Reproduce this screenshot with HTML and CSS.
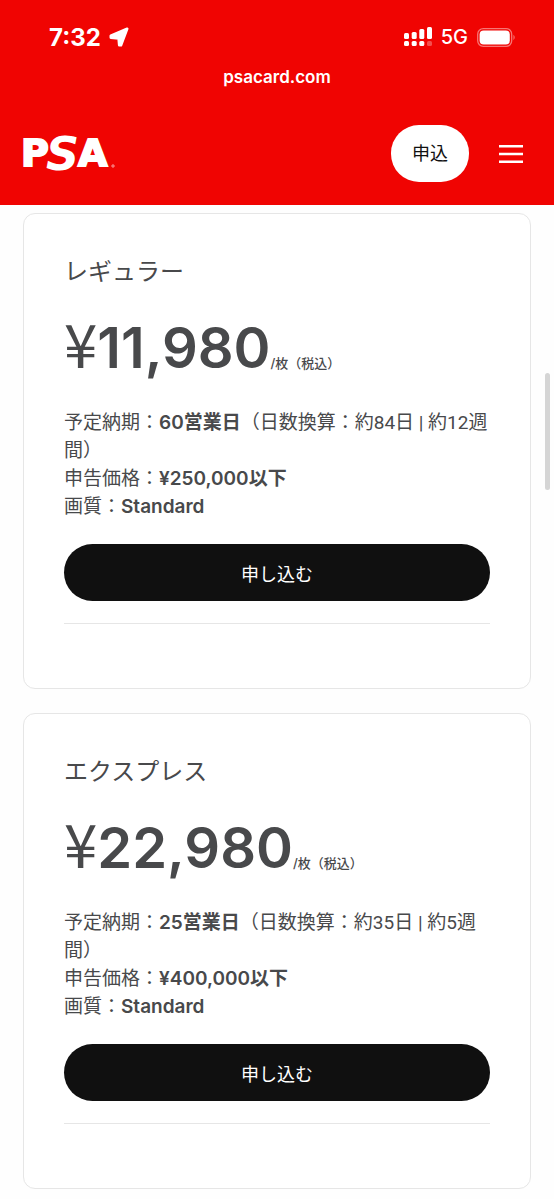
FILE: index.html
```
<!DOCTYPE html>
<html lang="ja">
<head>
<meta charset="utf-8">
<meta name="viewport" content="width=device-width, initial-scale=1">
<title>PSA</title>
<link rel="stylesheet" href="styles.css">
</head>
<body>
<header class="top">
  <div class="status">
    <div class="clock">
      <time>7:32</time>
      <svg class="arrow" viewBox="0 0 20 20" aria-hidden="true"><path d="M18.2 1.8 L12 18.2 L10.2 18.2 L9.6 11.4 L1.8 10.6 L1.8 8.8 Z" fill="#fff" stroke="#fff" stroke-width="2.6" stroke-linejoin="round"/></svg>
    </div>
    <div class="signals">
      <svg class="bars" viewBox="0 0 28 20" fill="#fff" aria-hidden="true">
        <rect x="0" y="6" width="5" height="6" rx="1.5"/><rect x="7.7" y="5" width="5" height="7" rx="1.5"/><rect x="15.3" y="2" width="5" height="10" rx="1.5"/><rect x="23" y="0" width="5" height="12" rx="1.5"/>
        <rect x="0" y="14" width="5" height="5" rx="1.5"/><rect x="7.7" y="14" width="5" height="5" rx="1.5"/><rect x="15.3" y="14" width="5" height="5" rx="1.5"/><rect x="23" y="14" width="5" height="5" rx="1.5" opacity=".3"/>
      </svg>
      <span class="network">5G</span>
      <svg class="battery" viewBox="0 0 39 19" aria-hidden="true"><rect x=".7" y=".7" width="34" height="17.6" rx="5.5" fill="none" stroke="#fff" stroke-opacity=".45" stroke-width="1.3"/><rect x="2.6" y="2.6" width="30.2" height="13.8" rx="4" fill="#fff"/><path d="M36.5 6.8 Q38.8 9.5 36.5 12.2 Z" fill="#fff" opacity=".5"/></svg>
    </div>
  </div>
  <div class="address">psacard.com</div>
  <nav class="nav">
    <a class="logo" href="#" aria-label="PSA">
      <svg viewBox="0 0 94 36" aria-hidden="true">
        <text class="logo-letter" x="-1" y="30">P</text>
        <text class="logo-letter" x="56" y="30">A</text>
        <text class="logo-swash" x="24" y="34">S</text>
        <circle cx="91" cy="30" r="1.2" fill="none" stroke="#fff" stroke-width=".6"/>
      </svg>
    </a>
    <div class="actions">
      <a class="apply-link" href="#">申込</a>
      <button class="menu" type="button" aria-label="メニュー"><svg viewBox="0 0 24 18" aria-hidden="true"><path d="M0 1.2H24M0 9H24M0 16.8H24" stroke="#fff" stroke-width="2.4"/></svg></button>
    </div>
  </nav>
</header>
<main class="plans">
  <article class="card">
    <h2 class="name">レギュラー</h2>
    <p class="price"><span class="yen">¥</span><span class="amount">11,980</span><span class="unit">/枚（税込）</span></p>
    <p class="details">予定納期：<b>60営業日</b>（日数換算：約84日 | 約12週間）<br>申告価格：<b>¥250,000以下</b><br>画質：<b>Standard</b></p>
    <button class="apply" type="button">申し込む</button>
    <hr class="rule">
  </article>
  <article class="card">
    <h2 class="name">エクスプレス</h2>
    <p class="price"><span class="yen">¥</span><span class="amount">22,980</span><span class="unit">/枚（税込）</span></p>
    <p class="details">予定納期：<b>25営業日</b>（日数換算：約35日 | 約5週間）<br>申告価格：<b>¥400,000以下</b><br>画質：<b>Standard</b></p>
    <button class="apply" type="button">申し込む</button>
    <hr class="rule">
  </article>
</main>
<div class="scroll-thumb"></div>
</body>
</html>
```
FILE: styles.css
```
* { box-sizing: border-box; }
body {
  margin: 0;
  background: #fefefe;
  color: #48494b;
  font-family: Inter, "Noto Sans CJK JP", sans-serif;
}
.top {
  padding-bottom: 23px;
  background: #f00402;
  color: #fff;
}
.status {
  display: flex;
  justify-content: space-between;
  align-items: center;
  padding: 24px 38px 0 49px;
  height: 50px;
}
.clock, .signals { display: flex; align-items: center; }
.clock { gap: 8px; font-size: 24px; font-weight: 700; }
.arrow { width: 20px; height: 20px; }
.signals { gap: 9px; }
.bars { width: 28px; height: 20px; }
.network { font-size: 20px; font-weight: 500; }
.battery { width: 39px; height: 19px; }
.address {
  padding-top: 15px;
  text-align: center;
  font-size: 17px;
  line-height: 24px;
  font-weight: 600;
}
.nav {
  display: flex;
  justify-content: space-between;
  align-items: center;
  padding: 36px 31px 0 22px;
}
.logo, .logo svg { display: block; }
.logo svg { width: 94px; height: 36px; overflow: visible; }
.logo-letter {
  font: bold 38px "DejaVu Sans", sans-serif;
  fill: #fff;
  stroke: #fff;
  stroke-width: 2;
}
.logo-swash {
  font: italic bold 46px "DejaVu Sans", sans-serif;
  fill: #fff;
  stroke: #f00402;
  stroke-width: 2;
  paint-order: stroke;
}
.actions { display: flex; align-items: center; gap: 30px; }
.apply-link {
  padding: 0 21px;
  border-radius: 28px;
  background: #fff;
  color: #111;
  font-size: 18px;
  line-height: 57px;
  text-decoration: none;
}
.menu { padding: 0; border: 0; background: none; }
.menu svg { display: block; width: 24px; height: 18px; }
.plans {
  display: flex;
  flex-direction: column;
  gap: 24px;
  padding: 8px 23px 12px;
}
.card {
  padding: 42px 40px 64px;
  border: 1px solid #e6e6e6;
  border-radius: 12px;
  background: #fff;
}
.name {
  margin: 0;
  font-size: 24px;
  line-height: 32px;
  font-weight: 400;
}
.price {
  display: flex;
  align-items: baseline;
  margin: 24px 0 25px;
}
.yen {
  font-family: "Noto Sans CJK JP", sans-serif;
  font-size: 60px;
  line-height: 56px;
}
.amount { font-size: 56px; font-weight: 600; line-height: 72px; }
.unit { font-size: 13px; font-weight: 500; line-height: 16px; }
.details {
  margin: 0 0 23px;
  font-family: Roboto, "Noto Sans CJK JP", sans-serif;
  font-size: 19px;
  line-height: 28px;
}
.details b {
  font-family: Inter, "Noto Sans CJK JP", sans-serif;
  font-weight: 600;
}
.apply {
  display: block;
  width: 100%;
  height: 57px;
  border: 0;
  border-radius: 29px;
  background: #101010;
  color: #fff;
  font-family: inherit;
  font-size: 18px;
}
.rule {
  margin: 22px 0 0;
  border: 0;
  border-top: 1px solid #e6e6e6;
}
.scroll-thumb {
  position: absolute;
  top: 373px;
  right: 4px;
  width: 5px;
  height: 117px;
  border-radius: 3px;
  background: #d5d5d5;
}
```
